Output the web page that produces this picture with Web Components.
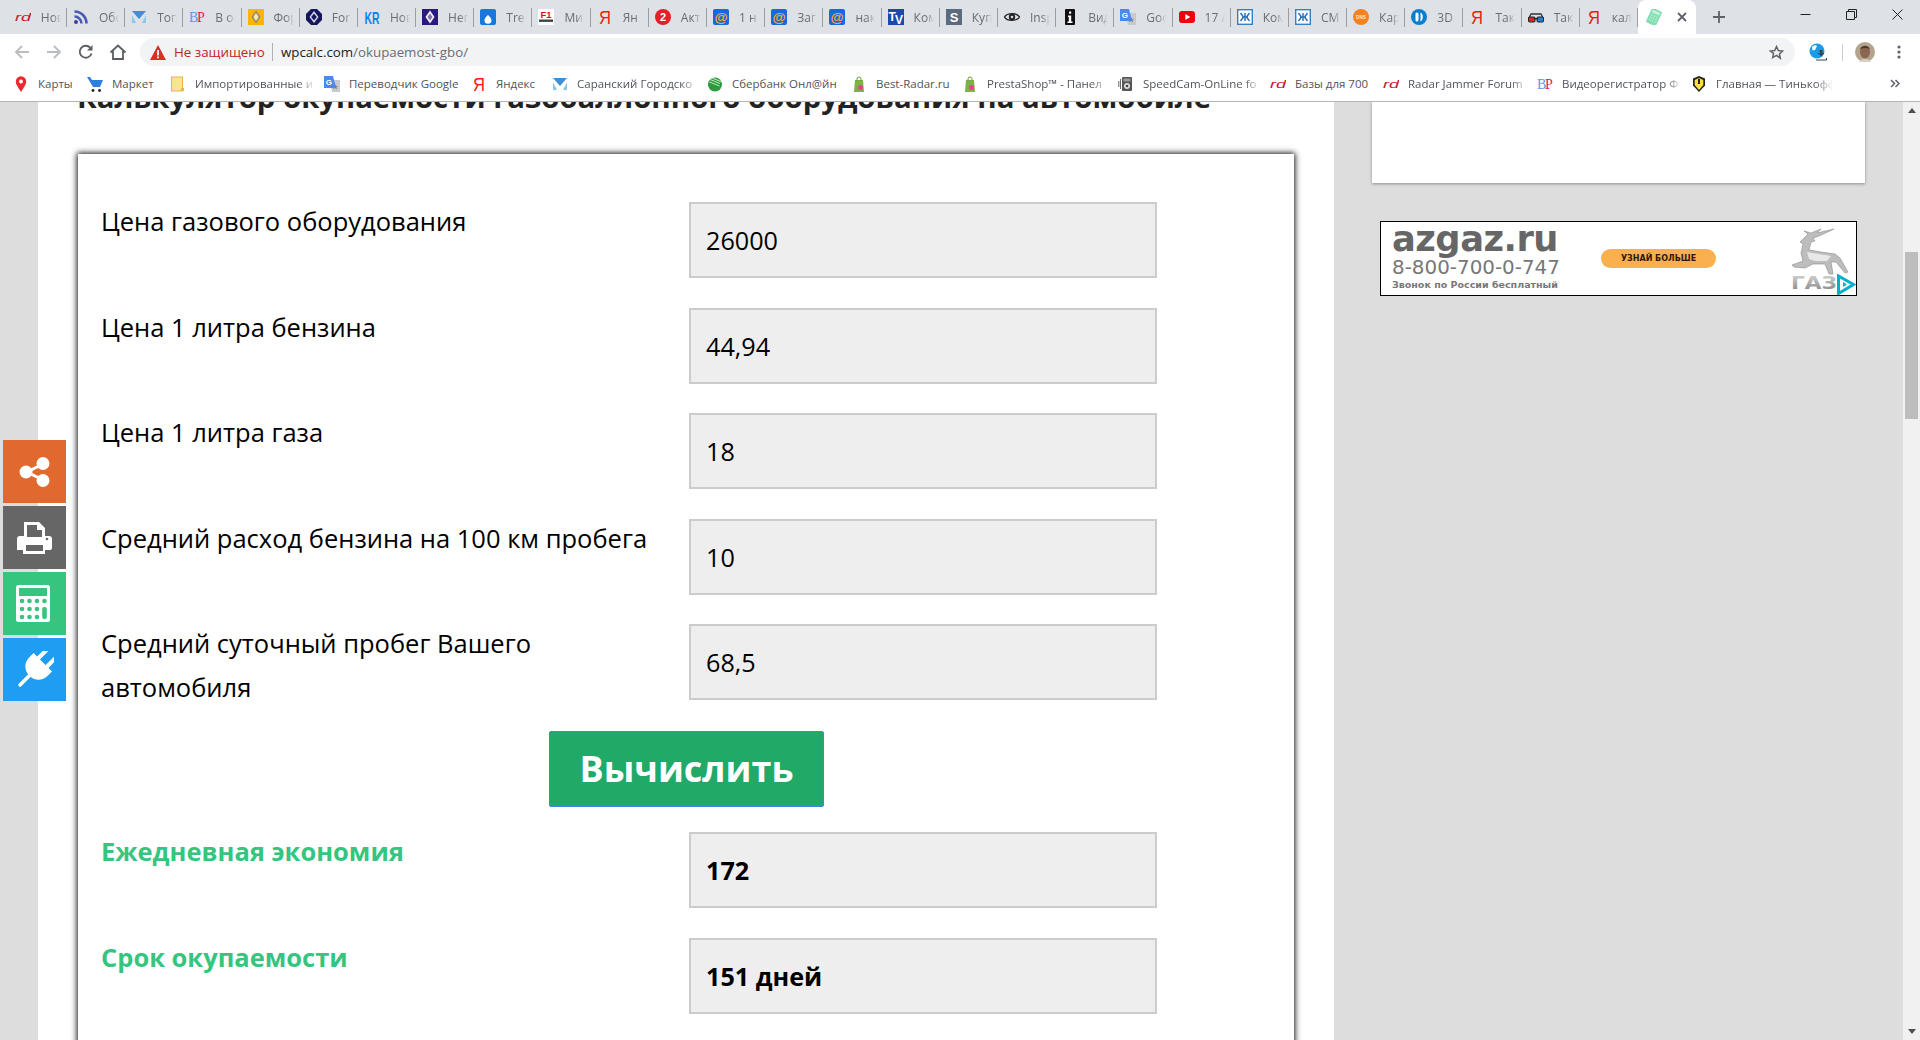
<!DOCTYPE html>
<html lang="ru">
<head>
<meta charset="utf-8">
<title>Калькулятор окупаемости ГБО</title>
<style>
  html, body { margin: 0; height: 100%; overflow: hidden; background: #ddd; }
  body { font-family: "Open Sans", "Liberation Sans", sans-serif; }
  #app { display: flex; flex-direction: column; width: 1920px; height: 1040px; }
</style>
</head>
<body>
<div id="app">
  <browser-chrome></browser-chrome>
  <site-page>
    <h-title slot="main">Калькулятор окупаемости газобаллонного оборудования на автомобиле</h-title>
    <calc-card slot="main">
      <calc-row><span slot="label">Цена газового оборудования</span>26000</calc-row>
      <calc-row><span slot="label">Цена 1 литра бензина</span>44,94</calc-row>
      <calc-row><span slot="label">Цена 1 литра газа</span>18</calc-row>
      <calc-row><span slot="label">Средний расход бензина на 100 км пробега</span>10</calc-row>
      <calc-row><span slot="label">Средний суточный пробег Вашего автомобиля</span>68,5</calc-row>
      <calc-button>Вычислить</calc-button>
      <calc-row result><span slot="label">Ежедневная экономия</span>172</calc-row>
      <calc-row result><span slot="label">Срок окупаемости</span>151 дней</calc-row>
    </calc-card>
    <side-card slot="side"></side-card>
    <ad-banner slot="side"></ad-banner>
  </site-page>
</div>

<script>
const letter = (txt, fill, size, opts = "") =>
  `<text x="8" y="${8 + size * 0.36}" text-anchor="middle" fill="${fill}" font-size="${size}" font-family="Liberation Sans, sans-serif" ${opts}>${txt}</text>`;

// favicons, all on a 16x16 box
const icons = {
  rd: letter("rd", "#c4122f", 10, 'font-style="italic" textLength="16" lengthAdjust="spacingAndGlyphs"'),
  rss: `<circle cx="3" cy="13" r="2" fill="#3c3f9c"/><path d="M1.5 7.5a7 7 0 0 1 7 7M1.5 2.5a12 12 0 0 1 12 12" fill="none" stroke="#4a5ab0" stroke-width="2.6"/>`,
  tor: `<path d="M1 2h14l-7 8z" fill="#3f8ed8"/><path d="M1 6l4 8H1zM15 6v8h-4z" fill="#8cc7ea"/>`,
  bp: `<text x="0" y="13" fill="#6d8fe6" font-size="14" font-family="Liberation Serif, serif">B</text><text x="8" y="13" fill="#e0204a" font-size="14" font-family="Liberation Serif, serif">P</text>`,
  renaultY: `<rect width="16" height="16" fill="#fbb500"/><path d="M8 1.5l4.5 6.5L8 14.5 3.5 8z" fill="#8d8a7a"/><path d="M8 4l2.6 4L8 12 5.4 8z" fill="#fbe9a8"/>`,
  fordD: `<path d="M5 0h6l5 5v6l-5 5H5l-5-5V5z" fill="#14165e"/><path d="M8 2L12.5 8 8 14 3.5 8z" fill="#d9dbe8"/><path d="M8 4.5L10.8 8 8 11.500 5.2 8z" fill="#14165e"/>`,
  kr: `<text x="8" y="14.500" text-anchor="middle" fill="#0a84f0" font-size="17" font-weight="700" font-family="Liberation Sans, sans-serif" textLength="15" lengthAdjust="spacingAndGlyphs">KR</text>`,
  renaultP: `<rect width="16" height="16" fill="#2a1a7c"/><path d="M8 1.5l4.5 6.5L8 14.5 3.5 8z" fill="#f2f2f6"/><path d="M8 4.5L10.5 8 8 11.5 5.5 8z" fill="#7c76a8"/>`,
  drop: `<rect width="16" height="16" rx="2" fill="#1877d8"/><path d="M8 2.5v3c0 1 3.5 3 3.5 6a3.5 3.3 0 0 1-7 0c0-3 3.5-5 3.5-6z" fill="#fff"/>`,
  f1: `<rect width="16" height="16" fill="#fff"/><text x="8" y="8.5" text-anchor="middle" fill="#d8101c" font-size="9.5" font-weight="700" font-family="Liberation Sans, sans-serif">F1</text><rect x="1" y="10.5" width="14" height="2.4" fill="#444"/>`,
  ya: `<text x="8" y="14.5" text-anchor="middle" fill="#f4190c" font-size="18" font-family="Liberation Sans, sans-serif" textLength="12" lengthAdjust="spacingAndGlyphs">Я</text>`,
  zen: `<circle cx="8" cy="8" r="8" fill="#e61e28"/>` + letter("2", "#fff", 11, 'font-weight="700"'),
  mail: `<rect width="16" height="16" rx="2" fill="#1568e0"/>` + letter("@", "#ffaa2b", 13.5, 'font-weight="700"'),
  tv: `<rect width="16" height="16" fill="#1d49a6"/><text x="0.5" y="12" fill="#fff" font-size="12" font-weight="700" font-family="Liberation Sans, sans-serif">T</text><text x="7" y="15" fill="#fff" font-size="12" font-weight="700" font-family="Liberation Sans, sans-serif">V</text>`,
  s: `<rect width="16" height="16" fill="#5a6b80"/>` + letter("S", "#fff", 13, 'font-weight="700"'),
  eye: `<path d="M0.5 8C3 3.5 13 3.5 15.5 8 13 12.5 3 12.5.5 8z" fill="none" stroke="#222" stroke-width="1.4"/><circle cx="8" cy="8" r="3.2" fill="#222"/><circle cx="8" cy="8" r="1.3" fill="#ddd"/>`,
  info: `<rect x="3" width="10" height="16" rx="1" fill="#111"/><rect x="7" y="2.5" width="2.2" height="2.2" fill="#fff"/><path d="M6 6.5h3.2v6H10.5v1.5h-5v-1.5h1.3V8H6z" fill="#fff"/>`,
  gt: `<path d="M6 4h10v12H8z" fill="#c8c9cc"/><path d="M11 8l1 2h2l-1.600 1.300.6 2-2-1.300-2 1.300.6-2L8 10h2z" fill="#777"/><path d="M0 0h9l3 12H0z" fill="#4a8af0"/>` + `<text x="4.800" y="9" text-anchor="middle" fill="#fff" font-size="8" font-weight="700" font-family="Liberation Sans, sans-serif">G</text>`,
  yt: `<rect y="2" width="16" height="12" rx="3" fill="#f0000f"/><path d="M6.300 5l5 3-5 3z" fill="#fff"/>`,
  kbox: `<rect x=".7" y=".7" width="14.600" height="14.600" fill="#fff" stroke="#3480c4" stroke-width="1.400"/><path d="M3.500 4l3 4-3 4M12.500 4l-3 4 3 4M8 4v8M5 8h6" fill="none" stroke="#2a75b8" stroke-width="1.500"/>`,
  dns: `<circle cx="8" cy="8" r="8" fill="#f5811f"/><text x="8" y="9.800" text-anchor="middle" fill="#fde3c8" font-size="4.800" font-weight="700" font-family="Liberation Sans, sans-serif">DNS</text>`,
  threeD: `<circle cx="8" cy="8" r="8" fill="#0a7fd0"/><rect x="4.500" y="3.500" width="3" height="9" rx="1.500" fill="#fff"/><path d="M9.500 3.500c3 1 3 8 0 9z" fill="#fff"/>`,
  glasses: `<path d="M0 11l3-6h10l3 6" fill="none" stroke="#333" stroke-width="1.300"/><rect x=".5" y="8" width="6.500" height="5" rx="1" fill="#e2202c" stroke="#222"/><rect x="9" y="8" width="6.500" height="5" rx="1" fill="#1d7fd8" stroke="#222"/><rect x="6" y="9" width="4" height="1.300" fill="#222"/>`,
  calc: `<g transform="rotate(25 8 8)"><rect x="2.500" y="0" width="11" height="16" rx="1.500" fill="#82dfb2"/><rect x="4" y="1.800" width="8" height="2.800" fill="#c8f2dd"/><path d="M4.500 7h7M4.500 9.500h7M4.500 12h7" stroke="#c8f2dd" stroke-width="1.200" stroke-dasharray="1.400 1.400"/></g>`,
  pin: `<path d="M8 16C5 11 2.800 8.500 2.800 5.500a5.200 5.200 0 0 1 10.400 0C13.200 8.500 11 11 8 16z" fill="#f0282d"/><circle cx="8" cy="5.500" r="2" fill="#fff"/>`,
  cart: `<path d="M0 1h3l2 3h11l-3 7H6z" fill="#2f7fe0"/><circle cx="6" cy="14.500" r="1.400" fill="#222"/><circle cx="12.500" cy="14.500" r="1.400" fill="#222"/>`,
  folder: `<rect x="1.500" y="1" width="11" height="14" fill="#fde293" stroke="#e6b93e"/><rect x="11" y="12" width="3" height="3" fill="#e6b93e"/>`,
  sber: `<circle cx="8" cy="8.500" r="7" fill="#2c9a3e"/><path d="M3 3.500l10 4M2.500 6l10 4M5 2l10 4" stroke="#c6eec0" stroke-width="1"/>`,
  presta: `<path d="M4 4h8l1 12H3z" fill="#7cb342"/><path d="M6 5V3a2 2 0 0 1 4 0v2" fill="none" stroke="#6a9c38"/><circle cx="9.500" cy="11.500" r="2.500" fill="#e0458c"/>`,
  speed: `<rect x="4" y="1" width="10" height="14" rx="1" fill="#555"/><circle cx="9" cy="10" r="3" fill="#ddd"/><circle cx="9" cy="10" r="1.300" fill="#444"/><rect x="5.500" y="2.500" width="7" height="3" fill="#999"/><path d="M2.500 3v10M.8 5v6" stroke="#666"/>`,
  tink: `<path d="M8 0l6 2.500v7L8 16 2 9.500v-7z" fill="#222"/><path d="M8 2l4.300 2v5L8 14 3.700 9V4z" fill="#fde13a"/><rect x="7" y="3" width="2" height="5" fill="#222"/>`,
};
const favicon = (name, size = 16) =>
  `<svg width="${size}" height="${size}" viewBox="0 0 16 16" aria-hidden="true">${icons[name]}</svg>`;

class BrowserTab extends HTMLElement {
  constructor() {
    super();
    this.attachShadow({ mode: "open" });
    this.shadowRoot.innerHTML = `
      <style>
        :host { display: flex; align-items: center; box-sizing: border-box; width: 58.2px; height: 34px; position: relative; padding-left: 6px; flex: none; }
        :host::after { content: ""; position: absolute; right: 0; top: 8px; height: 19px; width: 1px; background: #9a9da1; }
        .title { margin-left: 10px; font: 12px "Open Sans", sans-serif; color: #6a6e73; white-space: nowrap; width: 20px; overflow: hidden; -webkit-mask-image: linear-gradient(90deg, #000 60%, transparent); mask-image: linear-gradient(90deg, #000 60%, transparent); }
        svg { flex: none; }
      </style>
      ${favicon(this.getAttribute("icon"))}
      <span class="title"><slot></slot></span>`;
  }
}
customElements.define("browser-tab", BrowserTab);

class BookmarkItem extends HTMLElement {
  constructor() {
    super();
    this.attachShadow({ mode: "open" });
    const w = this.getAttribute("w");
    this.shadowRoot.innerHTML = `
      <style>
        :host { display: flex; align-items: center; box-sizing: border-box; flex: none; width: ${w}px; height: 35px; }
        .title { margin-left: 9px; font: 11.500px "Open Sans", sans-serif; color: #50545a; white-space: nowrap; overflow: hidden; flex: 1; margin-right: 8px; ${this.hasAttribute("fade") ? "-webkit-mask-image: linear-gradient(90deg,#000 85%,transparent); mask-image: linear-gradient(90deg,#000 85%,transparent);" : ""} }
        svg { flex: none; }
      </style>
      ${favicon(this.getAttribute("icon"))}
      <span class="title"><slot></slot></span>`;
  }
}
customElements.define("bookmark-item", BookmarkItem);

class BrowserChrome extends HTMLElement {
  constructor() {
    super();
    this.attachShadow({ mode: "open" });
    const tabs = [
      ["rd", "Нов"], ["rss", "Обс"], ["tor", "Топ"], ["bp", "В оч"], ["renaultY", "Фор"], ["fordD", "For"], ["kr", "Нов"],
      ["renaultP", "Нег"], ["drop", "Tre"], ["f1", "Ми"], ["ya", "Ян"], ["zen", "Акт"], ["mail", "1 н"], ["mail", "Заг"],
      ["mail", "нак"], ["tv", "Ком"], ["s", "Куп"], ["eye", "Insp"], ["info", "Вид"], ["gt", "Goo"], ["yt", "17 /"],
      ["kbox", "Ком"], ["kbox", "СМ"], ["dns", "Кар"], ["threeD", "3D"], ["ya", "Так"], ["glasses", "Так"], ["ya", "кал"],
    ].map(([icon, t]) => `<browser-tab icon="${icon}">${t}</browser-tab>`).join("");
    // icon, width of the item, label
    const marks = [
      ["pin", 74, "Карты"], ["cart", 83, "Маркет"], ["folder", 154, "Импортированные и", 1], ["gt", 147, "Переводчик Google"],
      ["ya", 81, "Яндекс"], ["tor", 155, "Саранский Городско", 1], ["sber", 144, "Сбербанк Онл@йн"], ["presta", 111, "Best-Radar.ru"],
      ["presta", 156, "PrestaShop™ - Панел", 1], ["speed", 152, "SpeedCam-OnLine fo", 1], ["rd", 113, "Базы для 700"],
      ["rd", 154, "Radar Jammer Forum", 1], ["bp", 154, "Видеорегистратор Ф", 1], ["tink", 150, "Главная — Тинькофф", 1],
    ].map(([icon, w, t, fade]) => `<bookmark-item icon="${icon}" w="${w}" ${fade ? "fade" : ""}>${t}</bookmark-item>`).join("");
    this.shadowRoot.innerHTML = `
      <style>
        :host { display: block; flex: none; height: 102px; background: #fff; font-family: "Open Sans", sans-serif; position: relative; z-index: 1; }
        .strip { display: flex; height: 34px; background: #dee1e6; padding-left: 8.800px; box-sizing: border-box; }
        .active { position: relative; display: flex; align-items: center; width: 58px; height: 34px; background: #fff; border-radius: 8px 8px 0 0; box-sizing: border-box; padding-left: 8px; justify-content: space-between; padding-right: 8px; flex: none; }
        .plus { margin-left: 9px; width: 28px; height: 34px; display: flex; align-items: center; justify-content: center; }
        .win { margin-left: auto; display: flex; }
        .win span { width: 46px; height: 28px; display: flex; align-items: center; justify-content: center; }
        .bar { display: flex; align-items: center; height: 32px; padding: 0 0 0 6px; }
        .nav { width: 32px; height: 28px; margin-top: 4px; display: flex; align-items: center; justify-content: center; }
        .omni { margin: 4px 0 0 6px; width: 1655px; height: 28px; background: #f1f3f4; border-radius: 14px; display: flex; align-items: center; box-sizing: border-box; padding: 0 11px 0 10px; font-size: 13.300px; flex: none; }
        .warn { color: #c5221f; margin-left: 8px; width: 88px; white-space: nowrap; }
        .sep { width: 1px; height: 18px; background: #aeb1b5; margin: 0 8px 0 10px; }
        .host { color: #202124; }
        .path { color: #696d72; }
        .star { margin-left: auto; }
        .tools { display: flex; align-items: center; margin-top: 4px; flex: 1; }
        .ext { margin-left: 14px; }
        .tool-sep { width: 1px; height: 17px; background: #ccc; margin-left: 15px; }
        .avatar { margin-left: 12px; }
        .kebab { margin-left: 22px; }
        .marks { display: flex; height: 35px; padding-left: 13px; border-bottom: 1px solid #b4b4b4; }
        .more { margin-left: auto; width: 50px; display: flex; align-items: center; justify-content: center; }
      </style>
      <div class="strip">
        ${tabs}
        <div class="active">${favicon("calc")}
          <svg width="12" height="12" viewBox="0 0 12 12"><path d="M2 2l8 8M10 2l-8 8" stroke="#5f6368" stroke-width="1.800"/></svg>
        </div>
        <div class="plus"><svg width="14" height="14" viewBox="0 0 14 14"><path d="M7 1v12M1 7h12" stroke="#5f6368" stroke-width="1.800"/></svg></div>
        <div class="win">
          <span><svg width="11" height="11" viewBox="0 0 11 11"><path d="M.5 5.500h10" stroke="#222"/></svg></span>
          <span><svg width="11" height="11" viewBox="0 0 11 11"><path d="M.5 2.500h8v8h-8zM2.500 2.500V.5h8v8H8.500" fill="none" stroke="#222"/></svg></span>
          <span><svg width="11" height="11" viewBox="0 0 11 11"><path d="M.5.5l10 10M10.500.5l-10 10" stroke="#222"/></svg></span>
        </div>
      </div>
      <div class="bar">
        <div class="nav"><svg width="16" height="16" viewBox="0 0 16 16"><path d="M15 8H2M8 2L2 8l6 6" fill="none" stroke="#b9bcc0" stroke-width="1.800"/></svg></div>
        <div class="nav"><svg width="16" height="16" viewBox="0 0 16 16"><path d="M1 8h13M8 2l6 6-6 6" fill="none" stroke="#b9bcc0" stroke-width="1.800"/></svg></div>
        <div class="nav"><svg width="16" height="16" viewBox="0 0 16 16"><path d="M13.500 9.500A6 6 0 1 1 12.200 3.700" fill="none" stroke="#5a5e63" stroke-width="1.800"/><path d="M14.500 1v5.500H9z" fill="#5a5e63"/></svg></div>
        <div class="nav"><svg width="18" height="16" viewBox="0 0 18 16"><path d="M1.500 8.500L9 1.500l7.500 7M4 7v8h10V7" fill="none" stroke="#5a5e63" stroke-width="1.800"/></svg></div>
        <div class="omni">
          <svg width="16" height="15" viewBox="0 0 16 15"><path d="M8 0l8 15H0z" fill="#d93025"/><rect x="7.100" y="5" width="1.800" height="5.500" fill="#fff"/><rect x="7.100" y="11.500" width="1.800" height="1.800" fill="#fff"/></svg>
          <span class="warn">Не защищено</span><span class="sep"></span>
          <span class="host">wpcalc.com</span><span class="path">/okupaemost-gbo/</span>
          <svg class="star" width="15" height="15" viewBox="0 0 24 24"><path d="M12 2.500l2.900 6.300 6.900.8-5.100 4.700 1.400 6.800L12 16.700l-6.100 3.400 1.400-6.800L2.200 9.600l6.900-.8z" fill="none" stroke="#5f6368" stroke-width="2.400"/></svg>
        </div>
        <div class="tools">
          <svg class="ext" width="18" height="18" viewBox="0 0 18 18"><circle cx="8" cy="8" r="7.500" fill="#1a9be8"/><path d="M3 4c2-2 4-2 5-1L6 7 3.500 7.500zM10 9l3 .5-2 3.500z" fill="#fff"/><path d="M10.500 7h3v3h2l-3.500 3.500L8.500 10h2z" fill="#37474f"/><path d="M7 17h10.500v-2" fill="none" stroke="#37474f"/></svg>
          <span class="tool-sep"></span>
          <svg class="avatar" width="20" height="20" viewBox="0 0 20 20"><circle cx="10" cy="10" r="10" fill="#b5a48c"/><ellipse cx="10" cy="10" rx="5" ry="6.500" fill="#8a6650"/><path d="M5 7c1-4 9-4 10 0-3-1.500-7-1.500-10 0z" fill="#3f3a36"/><path d="M4 20c1-4 11-4 12 0z" fill="#d8cfc4"/></svg>
          <svg class="kebab" width="4" height="14" viewBox="0 0 4 14"><circle cx="2" cy="2" r="1.600" fill="#5f6368"/><circle cx="2" cy="7" r="1.600" fill="#5f6368"/><circle cx="2" cy="12" r="1.600" fill="#5f6368"/></svg>
        </div>
      </div>
      <div class="marks">
        ${marks}
        <div class="more"><svg width="10" height="9" viewBox="0 0 10 9"><path d="M1 1l3.500 3.500L1 8M5.500 1L9 4.500 5.500 8" fill="none" stroke="#5f6368" stroke-width="1.500"/></svg></div>
      </div>`;
  }
}
customElements.define("browser-chrome", BrowserChrome);

class SitePage extends HTMLElement {
  constructor() {
    super();
    this.attachShadow({ mode: "open" });
    this.shadowRoot.innerHTML = `
      <style>
        :host { display: flex; flex: 1; min-height: 0; position: relative; overflow: hidden; background: #ddd; }
        .main { flex: none; width: 1296px; margin-left: 38px; box-sizing: border-box; padding-left: 39px; padding-right: 39px; background: #fff; overflow: hidden; }
        .side { flex: none; width: 493px; margin-left: 38px; }
        .scroll { margin-left: auto; width: 17px; background: #f1f1f1; display: flex; flex-direction: column; align-items: center; position: relative; }
        .up { margin-top: 6px; width: 0; height: 0; border: 4px solid transparent; border-top: 0; border-bottom: 5px solid #505050; }
        .thumb { margin-top: 139px; width: 13px; height: 167px; background: #bdbdbd; }
        .down { margin-top: auto; margin-bottom: 6px; width: 0; height: 0; border: 4px solid transparent; border-bottom: 0; border-top: 5px solid #505050; }
        .float { position: absolute; left: 3px; top: 338px; display: flex; flex-direction: column; gap: 3px; }
        .float div { width: 63px; height: 63px; display: flex; align-items: center; justify-content: center; }
      </style>
      <div class="main"><slot name="main"></slot></div>
      <div class="side"><slot name="side"></slot></div>
      <div class="scroll"><span class="up"></span><span class="thumb"></span><span class="down"></span></div>
      <div class="float">
        <div style="background:#e1692e">
          <svg width="32" height="32" viewBox="0 0 32 32"><path d="M24 8L8 16l16 8" fill="none" stroke="#fff" stroke-width="3"/><circle cx="24" cy="7.500" r="6.500" fill="#fff"/><circle cx="7" cy="16" r="6.500" fill="#fff"/><circle cx="24" cy="24.500" r="6.500" fill="#fff"/></svg>
        </div>
        <div style="background:#666">
          <svg width="35" height="32" viewBox="0 0 35 32"><path fill="#fff" d="M7 0h15l6 6v8h4a3 3 0 0 1 3 3v9a2 2 0 0 1-2 2h-5v4H6v-4H1a1 1 0 0 1-1-2v-9a3 3 0 0 1 3-3h4zM10 3v12h15V8h-5V3zM9 23v6h17v-6z"/><circle cx="30" cy="17" r="1.300" fill="#666"/></svg>
        </div>
        <div style="background:#35c57f">
          <svg width="34" height="37" viewBox="0 0 34 37" style="margin-right:3px"><rect width="34" height="37" rx="2.500" fill="#fff"/><rect x="3" y="3" width="28" height="8" fill="#35c57f"/><g fill="#35c57f"><circle cx="6" cy="16" r="2.300"/><circle cx="13.500" cy="16" r="2.300"/><circle cx="21" cy="16" r="2.300"/><circle cx="28.500" cy="16" r="2.300"/><circle cx="6" cy="24" r="2.300"/><circle cx="13.500" cy="24" r="2.300"/><circle cx="21" cy="24" r="2.300"/><circle cx="6" cy="32" r="2.300"/><circle cx="13.500" cy="32" r="2.300"/><circle cx="21" cy="32" r="2.300"/><rect x="26.200" y="22" width="4.600" height="12" rx="2"/></g></svg>
        </div>
        <div style="background:#1f9df2">
          <svg width="38" height="38" viewBox="0 0 38 38"><g transform="rotate(45 19 19)" fill="#fff"><rect x="11" y="-6" width="4" height="16" rx="2"/><rect x="23" y="-6" width="4" height="16" rx="2"/><path d="M6 8h26v6c0 8-6 13-13 13S6 22 6 14z"/><rect x="17.200" y="25" width="3.600" height="17" rx="1.800"/></g></svg>
        </div>
      </div>`;
  }
}
customElements.define("site-page", SitePage);

class HTitle extends HTMLElement {
  constructor() {
    super();
    this.attachShadow({ mode: "open" });
    this.shadowRoot.innerHTML = `
      <style>
        :host { display: block; margin-top: -25.400px; height: 77.400px; font: 700 29.330px/40px "Open Sans", sans-serif; color: #222; white-space: nowrap; }
      </style>
      <slot></slot>`;
  }
}
customElements.define("h-title", HTitle);

class CalcCard extends HTMLElement {
  constructor() {
    super();
    this.attachShadow({ mode: "open" });
    this.shadowRoot.innerHTML = `
      <style>
        :host { display: block; width: 1216px; margin-left: 1px; box-sizing: border-box; padding: 46px 22px 60px 23px; background: #fff; box-shadow: 0 0 6px 1px #111; margin-bottom: 40px; font: 25.200px/44px "Open Sans", sans-serif; color: #000; }
      </style>
      <slot></slot>`;
  }
}
customElements.define("calc-card", CalcCard);

class CalcRow extends HTMLElement {
  constructor() {
    super();
    this.attachShadow({ mode: "open" });
    this.shadowRoot.innerHTML = `
      <style>
        :host { display: grid; grid-template-columns: 588px 468px; height: 105.600px; }
        .label { padding-right: 20px; margin-top: -1px; font-size: 25.500px; }
        .field { box-sizing: border-box; height: 76px; margin-top: 2px; padding-left: 15px; background: #eee; border: 2px solid #ccc; display: flex; align-items: center; }
        :host([result]) .label { color: #35c57f; font-weight: 700; }
        :host([result]) .field { font-weight: 700; }
      </style>
      <div class="label"><slot name="label"></slot></div>
      <div class="field"><slot></slot></div>`;
  }
}
customElements.define("calc-row", CalcRow);

class CalcButton extends HTMLElement {
  constructor() {
    super();
    this.attachShadow({ mode: "open" });
    this.shadowRoot.innerHTML = `
      <style>
        :host { display: flex; justify-content: center; margin: 3px 0 23px; }
        button { width: 275px; height: 76px; padding: 0; background: #20a967; color: #fff; border: 1px solid #3d86f0; border-radius: 2px; font: 700 36px "Open Sans", sans-serif; cursor: pointer; }
      </style>
      <button type="button"><slot></slot></button>`;
  }
}
customElements.define("calc-button", CalcButton);

class SideCard extends HTMLElement {
  constructor() {
    super();
    this.attachShadow({ mode: "open" });
    this.shadowRoot.innerHTML = `
      <style>
        :host { display: block; height: 81px; background: #fff; box-shadow: 0 1px 3px rgba(0,0,0,.35); }
      </style>`;
  }
}
customElements.define("side-card", SideCard);

class AdBanner extends HTMLElement {
  constructor() {
    super();
    this.attachShadow({ mode: "open" });
    this.shadowRoot.innerHTML = `
      <style>
        :host { display: flex; align-items: center; position: relative; box-sizing: border-box; width: 477px; height: 75px; margin: 38px 0 0 8px; background: #fff; border: 1px solid #000; border-width: 1.500px 1px; font-family: "DejaVu Sans", sans-serif; color: #777; overflow: hidden; }
        .text { margin-left: 11px; width: 170px; flex: none; margin-top: -2px; }
        .brand { font: 700 35.300px/30px "DejaVu Sans", sans-serif; letter-spacing: -0.500px; color: #666; white-space: nowrap; height: 33px; }
        .phone { font: 400 19.900px/22px "DejaVu Sans", sans-serif; white-space: nowrap; }
        .free { font: 700 9.500px/12px "DejaVu Sans", sans-serif; white-space: nowrap; }
        .more { margin-left: 39px; width: 115px; height: 19px; border-radius: 10px; background: #fbb04f; color: #2a1a10; font: 700 8px/19px "DejaVu Sans", sans-serif; text-align: center; flex: none; }
        .logo { margin-left: auto; margin-right: 7px; width: 58px; height: 62px; flex: none; }
        .choice { position: absolute; right: 0; bottom: 0; width: 20px; height: 21px; background: #fff; display: flex; }
      </style>
      <div class="text">
        <div class="brand">azgaz.ru</div>
        <div class="phone">8-800-700-0-747</div>
        <div class="free">Звонок по России бесплатный</div>
      </div>
      <div class="more">УЗНАЙ БОЛЬШЕ</div>
      <svg class="logo" viewBox="0 0 58 62">
        <defs><linearGradient id="g" x1="0" y1="0" x2="0" y2="1"><stop offset="0" stop-color="#d8d8d8"/><stop offset="1" stop-color="#808080"/></linearGradient></defs>
        <path fill="#bdbdbd" stroke="#8c8c8c" stroke-width=".6" d="M14 9l3-3-4-3 7 2 10-4-4 4 17-4-15 7-6 2 2 3-4 1-2 8 12 2 14 2 5 4 8 14-3 1-9-11-5 0 2 12-4 0-4-10-12 0-8 4-11-1-2-2 11-4-2-8 2-9-3-2z"/>
        <path fill="#e8e8e8" d="M16 24l12 2 12 2-4 5-12 0-6-2z"/>
        <text x="0" y="61" font-family="DejaVu Sans, sans-serif" font-weight="700" font-size="17" fill="url(#g)" textLength="46" lengthAdjust="spacingAndGlyphs">ГАЗ</text>
      </svg>
      <div class="choice"><svg width="20" height="21" viewBox="0 0 20 21"><path d="M2.500 2l15 8.500-15 9z" fill="none" stroke="#00aecd" stroke-width="3"/><path d="M7 8l4 2.500-4 2.500z" fill="#00aecd"/></svg></div>`;
  }
}
customElements.define("ad-banner", AdBanner);
</script>
</body>
</html>
